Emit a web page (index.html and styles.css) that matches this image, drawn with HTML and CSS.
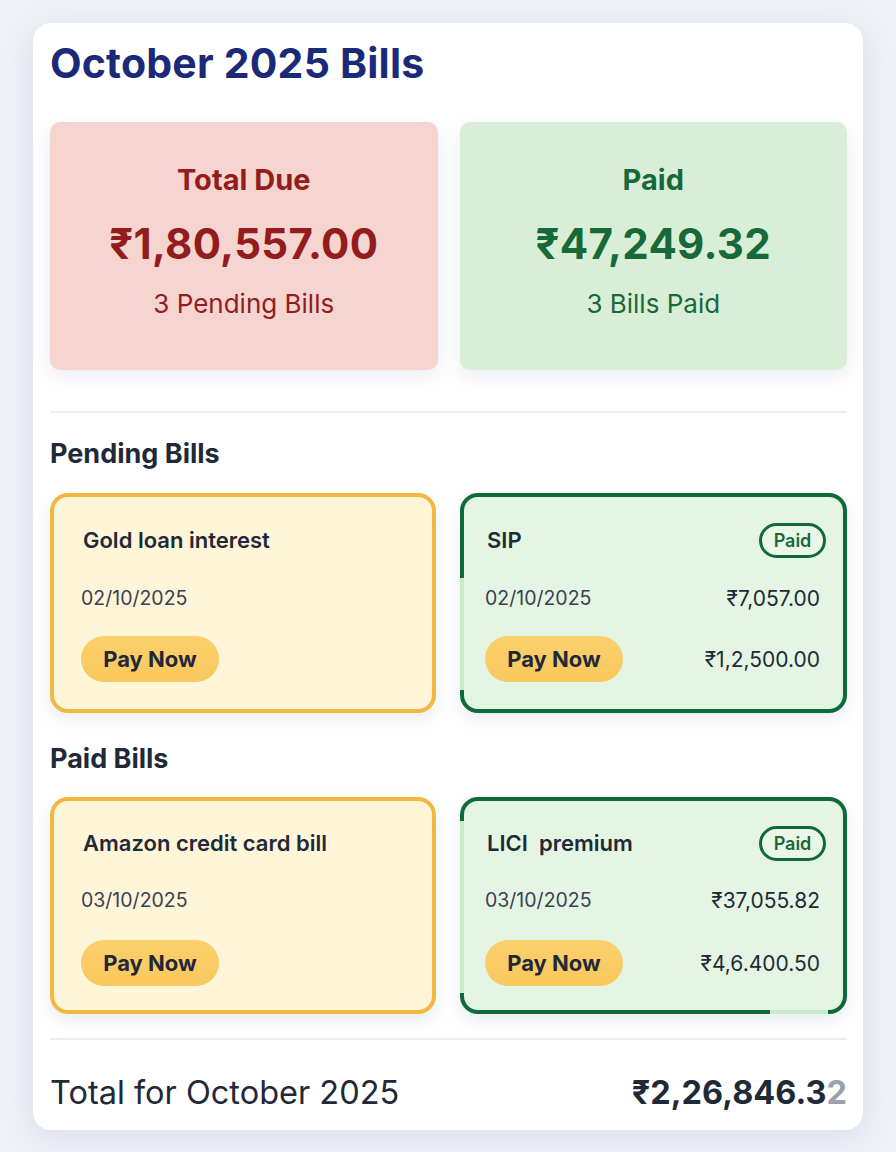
FILE: index.html
```html
<!DOCTYPE html>
<html lang="en">
<head>
<meta charset="utf-8">
<title>October 2025 Bills</title>
<link rel="stylesheet" href="styles.css">
</head>
<body>
<main class="panel">
  <h1 class="title">October 2025 Bills</h1>

  <section class="summary">
    <div class="stat stat-due">
      <div class="stat-label">Total Due</div>
      <div class="stat-amount">₹1,80,557.00</div>
      <div class="stat-sub">3 Pending Bills</div>
    </div>
    <div class="stat stat-paid">
      <div class="stat-label">Paid</div>
      <div class="stat-amount">₹47,249.32</div>
      <div class="stat-sub">3 Bills Paid</div>
    </div>
  </section>

  <hr class="divider">

  <h2 class="section-title">Pending Bills</h2>
  <div class="bill-grid">
    <div class="bill bill-pending">
      <div class="bill-row"><span class="bill-name">Gold loan interest</span></div>
      <div class="bill-row"><span class="bill-date">02/10/2025</span></div>
      <div class="bill-row"><button class="pay-btn">Pay Now</button></div>
    </div>
    <div class="bill bill-paid gap-left">
      <div class="bill-row"><span class="bill-name">SIP</span><span class="badge">Paid</span></div>
      <div class="bill-row"><span class="bill-date">02/10/2025</span><span class="bill-amt">₹7,057.00</span></div>
      <div class="bill-row"><button class="pay-btn">Pay Now</button><span class="bill-amt">₹1,2,500.00</span></div>
    </div>
  </div>

  <h2 class="section-title second">Paid Bills</h2>
  <div class="bill-grid">
    <div class="bill bill-pending short">
      <div class="bill-row"><span class="bill-name">Amazon credit card bill</span></div>
      <div class="bill-row"><span class="bill-date">03/10/2025</span></div>
      <div class="bill-row"><button class="pay-btn">Pay Now</button></div>
    </div>
    <div class="bill bill-paid short gap-bottom">
      <div class="bill-row"><span class="bill-name">LICI&nbsp; premium</span><span class="badge">Paid</span></div>
      <div class="bill-row"><span class="bill-date">03/10/2025</span><span class="bill-amt">₹37,055.82</span></div>
      <div class="bill-row"><button class="pay-btn">Pay Now</button><span class="bill-amt">₹4,6.400.50</span></div>
    </div>
  </div>

  <hr class="divider bottom">

  <footer class="total">
    <span class="total-label">Total for October 2025</span>
    <span class="total-amt">₹2,26,846.3<span class="fade">2</span></span>
  </footer>
</main>
</body>
</html>
```

FILE: styles.css
```css
* { box-sizing: border-box; }

html, body {
  margin: 0;
  padding: 0;
  background: #eef1f7;
  font-family: Inter, "Noto Sans", "DejaVu Sans", sans-serif;
  color: #1f2937;
}

body {
  padding: 23px 33px 0 33px;
  height: 1152px;
  overflow: hidden;
}

.panel {
  background: #ffffff;
  border-radius: 18px;
  height: 1107px;
  padding: 17px 16px 0 17px;
  box-shadow: 0 6px 30px rgba(120, 135, 170, 0.18);
}

.title {
  margin: 0;
  font-size: 41px;
  line-height: 46px;
  font-weight: 700;
  color: #1b2a78;
  letter-spacing: 0.2px;
}

.summary {
  margin-top: 36px;
  display: grid;
  grid-template-columns: 1fr 1fr;
  gap: 22px;
}

.stat {
  height: 248px;
  border-radius: 10px;
  padding-top: 41px;
  display: flex;
  flex-direction: column;
  align-items: center;
  box-shadow: 0 6px 18px rgba(120, 135, 170, 0.16);
}

.stat-due { background: #f6d4d0; color: #931c1c; }
.stat-paid { background: #d9eed7; color: #17693a; }

.stat-label {
  font-size: 29px;
  line-height: 34px;
  font-weight: 700;
}

.stat-amount {
  margin-top: 23px;
  font-size: 42px;
  line-height: 48px;
  font-weight: 700;
  letter-spacing: 0.3px;
}

.stat-sub {
  margin-top: 21px;
  font-size: 26px;
  line-height: 30px;
  font-weight: 400;
}

.divider {
  margin: 41px 0 0 0;
  border: 0;
  border-top: 2px solid #e8edf3;
}

.section-title {
  margin: 25px 0 0 0;
  font-size: 27px;
  line-height: 32px;
  font-weight: 700;
  color: #1f2937;
}

.section-title.second { margin-top: 30px; }

.bill-grid {
  margin-top: 23px;
  display: grid;
  grid-template-columns: 386px 387px;
  column-gap: 24px;
}

.section-title.second + .bill-grid { margin-top: 22px; }

.bill {
  position: relative;
  height: 220px;
  border: 4px solid;
  border-radius: 18px;
  padding: 30px 17px 0 27px;
  display: flex;
  flex-direction: column;
  box-shadow: 0 6px 16px rgba(120, 135, 170, 0.16);
}

.bill.short { height: 217px; padding-top: 29px; }

.bill-pending { background: #fff5d8; border-color: #f3b841; }
.bill-paid { background: #e5f5e3; border-color: #0f6a3b; padding-left: 21px; }

.bill-row {
  display: flex;
  align-items: center;
  justify-content: space-between;
}

.bill-row:nth-child(1) { height: 26px; }
.bill-row:nth-child(2) { height: 24px; margin-top: 33px; }
.bill-row:nth-child(3) { height: 46px; margin-top: 26px; }

.bill.short .bill-row:nth-child(2) { margin-top: 32px; }
.bill.short .bill-row:nth-child(3) { margin-top: 28px; }

.bill-name {
  padding-left: 2px;
  font-size: 22px;
  font-weight: 600;
  color: #1f2937;
}

.bill-date {
  font-size: 19.5px;
  font-weight: 400;
  color: #374151;
}

.bill-amt {
  margin-right: 6px;
  font-size: 21px;
  font-weight: 400;
  color: #1f2937;
}

.badge {
  width: 67px;
  height: 35px;
  border: 3px solid #11693b;
  border-radius: 18px;
  display: flex;
  align-items: center;
  justify-content: center;
  font-size: 18px;
  font-weight: 600;
  color: #17693a;
  background: #eaf7e8;
}

.pay-btn {
  width: 138px;
  height: 46px;
  border: 0;
  border-radius: 23px;
  background: linear-gradient(180deg, #fcd06c, #f9c85e);
  font-family: inherit;
  font-size: 22px;
  font-weight: 700;
  color: #1f2937;
  padding: 0;
}

.gap-left::before {
  content: "";
  position: absolute;
  left: -4px;
  top: 81px;
  width: 4px;
  height: 112px;
  background: #c9ebc7;
}

.gap-bottom::before {
  content: "";
  position: absolute;
  left: -4px;
  top: 20px;
  width: 4px;
  height: 172px;
  background: #c9ebc7;
}

.gap-bottom::after {
  content: "";
  position: absolute;
  bottom: -4px;
  left: 306px;
  width: 58px;
  height: 4px;
  background: #c9ebc7;
}

.divider.bottom { margin-top: 24px; }

.total {
  margin-top: 32px;
  height: 40px;
  display: flex;
  align-items: center;
  justify-content: space-between;
}

.total-label {
  font-size: 32.5px;
  font-weight: 400;
  color: #1f2937;
}

.total-amt {
  font-size: 32.5px;
  font-weight: 700;
  color: #1f2937;
}

.fade { color: #9aa1ab; }
```
